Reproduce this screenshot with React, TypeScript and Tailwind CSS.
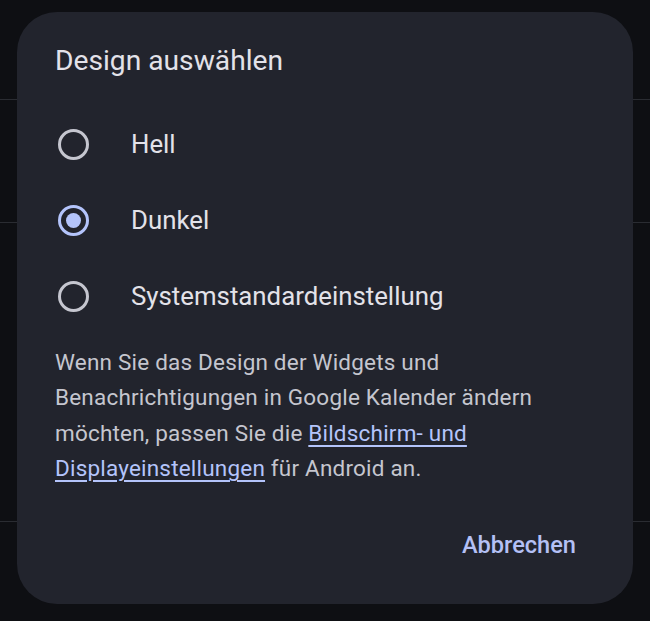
import React, { useState } from "react";

const options = ["Hell", "Dunkel", "Systemstandardeinstellung"];

function Radio({ checked }: { checked: boolean }) {
  return (
    <span
      className={
        checked
          ? "flex h-[31px] w-[31px] items-center justify-center rounded-full border-[3px] border-[#b4c4fb]"
          : "flex h-[31px] w-[31px] items-center justify-center rounded-full border-[3px] border-[#c5c6cf]"
      }
    >
      {checked && <span className="h-[15px] w-[15px] rounded-full bg-[#b4c4fb]" />}
    </span>
  );
}

export default function App() {
  const [selected, setSelected] = useState("Dunkel");

  return (
    <div
      className="relative h-[621px] w-[650px] overflow-hidden bg-[#0e0f13]"
      style={{ fontFamily: "Roboto, 'Noto Sans', sans-serif" }}
    >
      {/* list behind the dialog */}
      <div className="flex flex-col">
        <div className="h-[100px] border-b border-[#2a2c32]" />
        <div className="h-[123px] border-b border-[#2a2c32]" />
        <div className="h-[299px] border-b border-[#2a2c32]" />
      </div>

      {/* dialog */}
      <div className="absolute left-[17px] top-[12px] flex h-[592px] w-[616px] flex-col rounded-[40px] bg-[#22242d] pl-[38px] pr-[50px] pt-[31px]">
        <h2 className="text-[28.2px] leading-[36px] text-[#e3e2e9]">Design auswählen</h2>

        <div className="mt-[27px] flex flex-col">
          {options.map((opt) => (
            <button
              key={opt}
              onClick={() => setSelected(opt)}
              className="flex h-[76px] items-center text-left"
            >
              <span className="ml-[3px]">
                <Radio checked={selected === opt} />
              </span>
              <span className="ml-[42px] text-[25.8px] text-[#e3e2e9]">{opt}</span>
            </button>
          ))}
        </div>

        <p className="mt-[11px] text-[22.5px] leading-[35.3px] tracking-[0.2px] text-[#c5c6cf]">
          Wenn Sie das Design der Widgets und Benachrichtigungen in Google Kalender ändern
          möchten, passen Sie die{" "}
          <a className="text-[#b4c4fb] underline decoration-2 underline-offset-4">
            Bildschirm- und Displayeinstellungen
          </a>{" "}
          für Android an.
        </p>

        <div className="mt-auto mb-[41px] flex justify-end pr-[7px]">
          <button className="text-[23.6px] font-medium text-[#b4c0f5]">Abbrechen</button>
        </div>
      </div>
    </div>
  );
}
